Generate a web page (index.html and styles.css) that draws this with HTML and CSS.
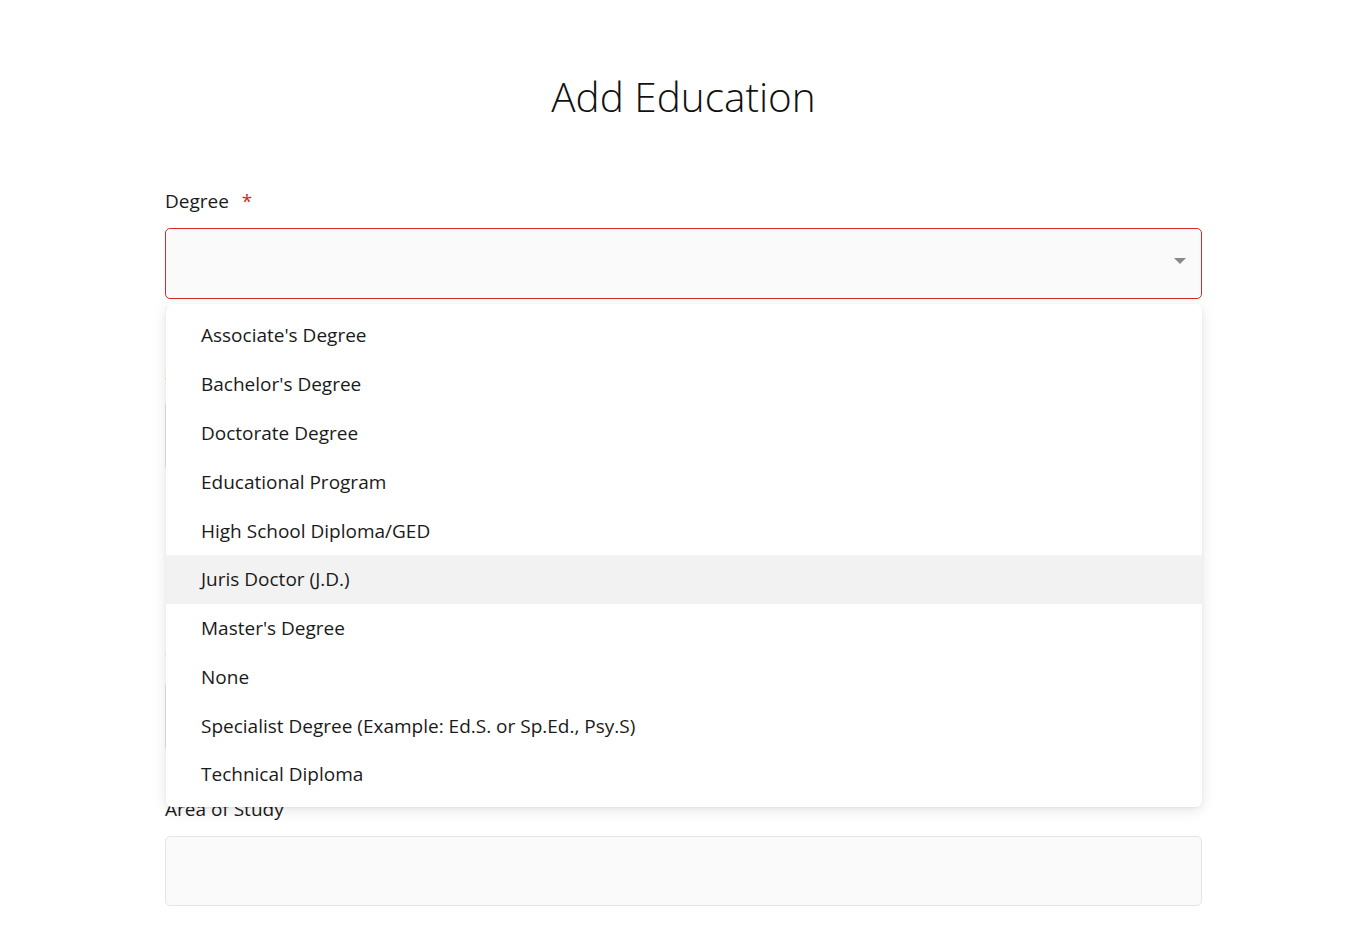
FILE: index.html
```html
<!DOCTYPE html>
<html lang="en">
<head>
<meta charset="utf-8">
<title>Add Education</title>
<link rel="stylesheet" href="styles.css">
</head>
<body>
<main class="page">
  <h1 class="title">Add Education</h1>
  <form class="form">
    <div class="field field-open">
      <label class="label">Degree <span class="req">*</span></label>
      <div class="select select-error">
        <span class="caret"></span>
      </div>
      <div class="error-text">Please select a degree</div>
      <ul class="menu">
        <li class="option">Associate's Degree</li>
        <li class="option">Bachelor's Degree</li>
        <li class="option">Doctorate Degree</li>
        <li class="option">Educational Program</li>
        <li class="option">High School Diploma/GED</li>
        <li class="option option-active">Juris Doctor (J.D.)</li>
        <li class="option">Master's Degree</li>
        <li class="option">None</li>
        <li class="option">Specialist Degree (Example: Ed.S. or Sp.Ed., Psy.S)</li>
        <li class="option">Technical Diploma</li>
      </ul>
    </div>
    <div class="field field-school">
      <label class="label">School <span class="req">*</span></label>
      <div class="input"></div>
    </div>
    <div class="field field-grad">
      <label class="label">Graduation Year</label>
      <div class="input"></div>
    </div>
    <div class="field field-area">
      <label class="label">Area of Study</label>
      <div class="input input-area"></div>
    </div>
  </form>
</main>
</body>
</html>
```
FILE: styles.css
```css
* { box-sizing: border-box; }
html, body { margin: 0; padding: 0; background: #fff; }
body {
  font-family: "Open Sans", "Noto Sans", "Liberation Sans", sans-serif;
  color: #1a1a1a;
}
.page {
  width: 1037px;
  margin: 0 0 0 165px;
  padding-top: 68px;
}
.title {
  margin: 0;
  text-align: center;
  font-weight: 300;
  font-size: 40.5px;
  line-height: 58px;
  color: #111;
}
.form {
  margin-top: 62px;
  display: flex;
  flex-direction: column;
}
.field { position: relative; display: flex; flex-direction: column; }
.label {
  font-size: 19px;
  line-height: 26px;
  color: #1a1a1a;
  margin-bottom: 14px;
}
.req { color: #d0262b; margin-left: 8px; }
.select, .input {
  height: 71px;
  border: 1px solid #e4e4e4;
  border-radius: 5px;
  background: #fafafa;
  position: relative;
}
.select.select-error { border: 1px solid #d42a2a; }
.input-area { height: 70px; }
.caret {
  position: absolute;
  right: 15px;
  top: 29px;
  width: 0; height: 0;
  border-left: 6px solid transparent;
  border-right: 6px solid transparent;
  border-top: 6px solid #8a8a8a;
}
.error-text {
  color: #d42a2a;
  font-size: 14px;
  line-height: 20px;
  margin-top: 4px;
}
.field-school { margin-top: 37px; }
.field-grad { margin-top: 170px; }
.field-area { margin-top: 44px; }
.menu {
  position: absolute;
  left: 1px;
  right: 0;
  top: 116px;
  margin: 0;
  padding: 7px 0 8px;
  list-style: none;
  background: #fff;
  border-radius: 6px;
  box-shadow: 0 3px 14px rgba(0,0,0,0.11), 0 1px 3px rgba(0,0,0,0.05);
  z-index: 10;
}
.option {
  font-size: 19px;
  line-height: 26px;
  padding: 11.4px 35px;
  color: #1a1a1a;
}
.option-active { background: #f2f2f2; }
```
